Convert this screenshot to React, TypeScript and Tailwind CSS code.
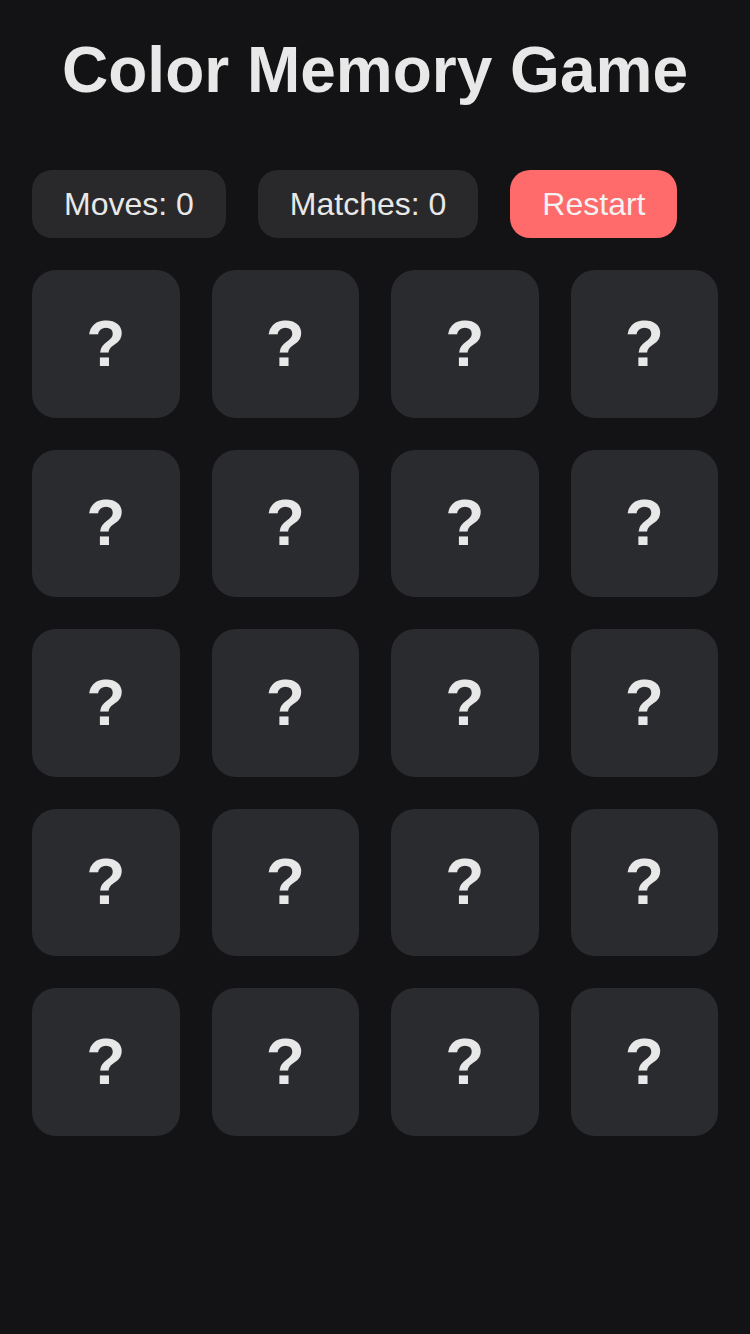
import React from "react";

const CARDS = Array.from({ length: 20 }, (_, i) => i);

export default function App() {
  return (
    <div
      className="min-h-[1334px] bg-[#131315] px-8 pt-[22px] text-[#e8e8e8]"
      style={{ fontFamily: '"Liberation Sans", Arial, sans-serif' }}
    >
      <h1 className="text-center text-[64px] font-bold leading-normal">
        Color Memory Game
      </h1>

      {/* Stats */}
      <div className="mt-[52px] flex items-center gap-8">
        <div className="rounded-[20px] bg-[#29292c] px-8 py-4 text-[32px] leading-9">
          Moves: 0
        </div>
        <div className="rounded-[20px] bg-[#29292c] px-8 py-4 text-[32px] leading-9">
          Matches: 0
        </div>
        <button className="rounded-[20px] bg-[#ff6b6b] px-8 py-4 text-[32px] leading-9 text-[#f2f2f2]">
          Restart
        </button>
      </div>

      {/* Board */}
      <div className="mt-8 grid grid-cols-4 gap-8">
        {CARDS.map((i) => (
          <div
            key={i}
            className="flex aspect-square items-center justify-center rounded-3xl bg-[#2a2b2e] text-[64px] font-bold"
          >
            ?
          </div>
        ))}
      </div>
    </div>
  );
}
